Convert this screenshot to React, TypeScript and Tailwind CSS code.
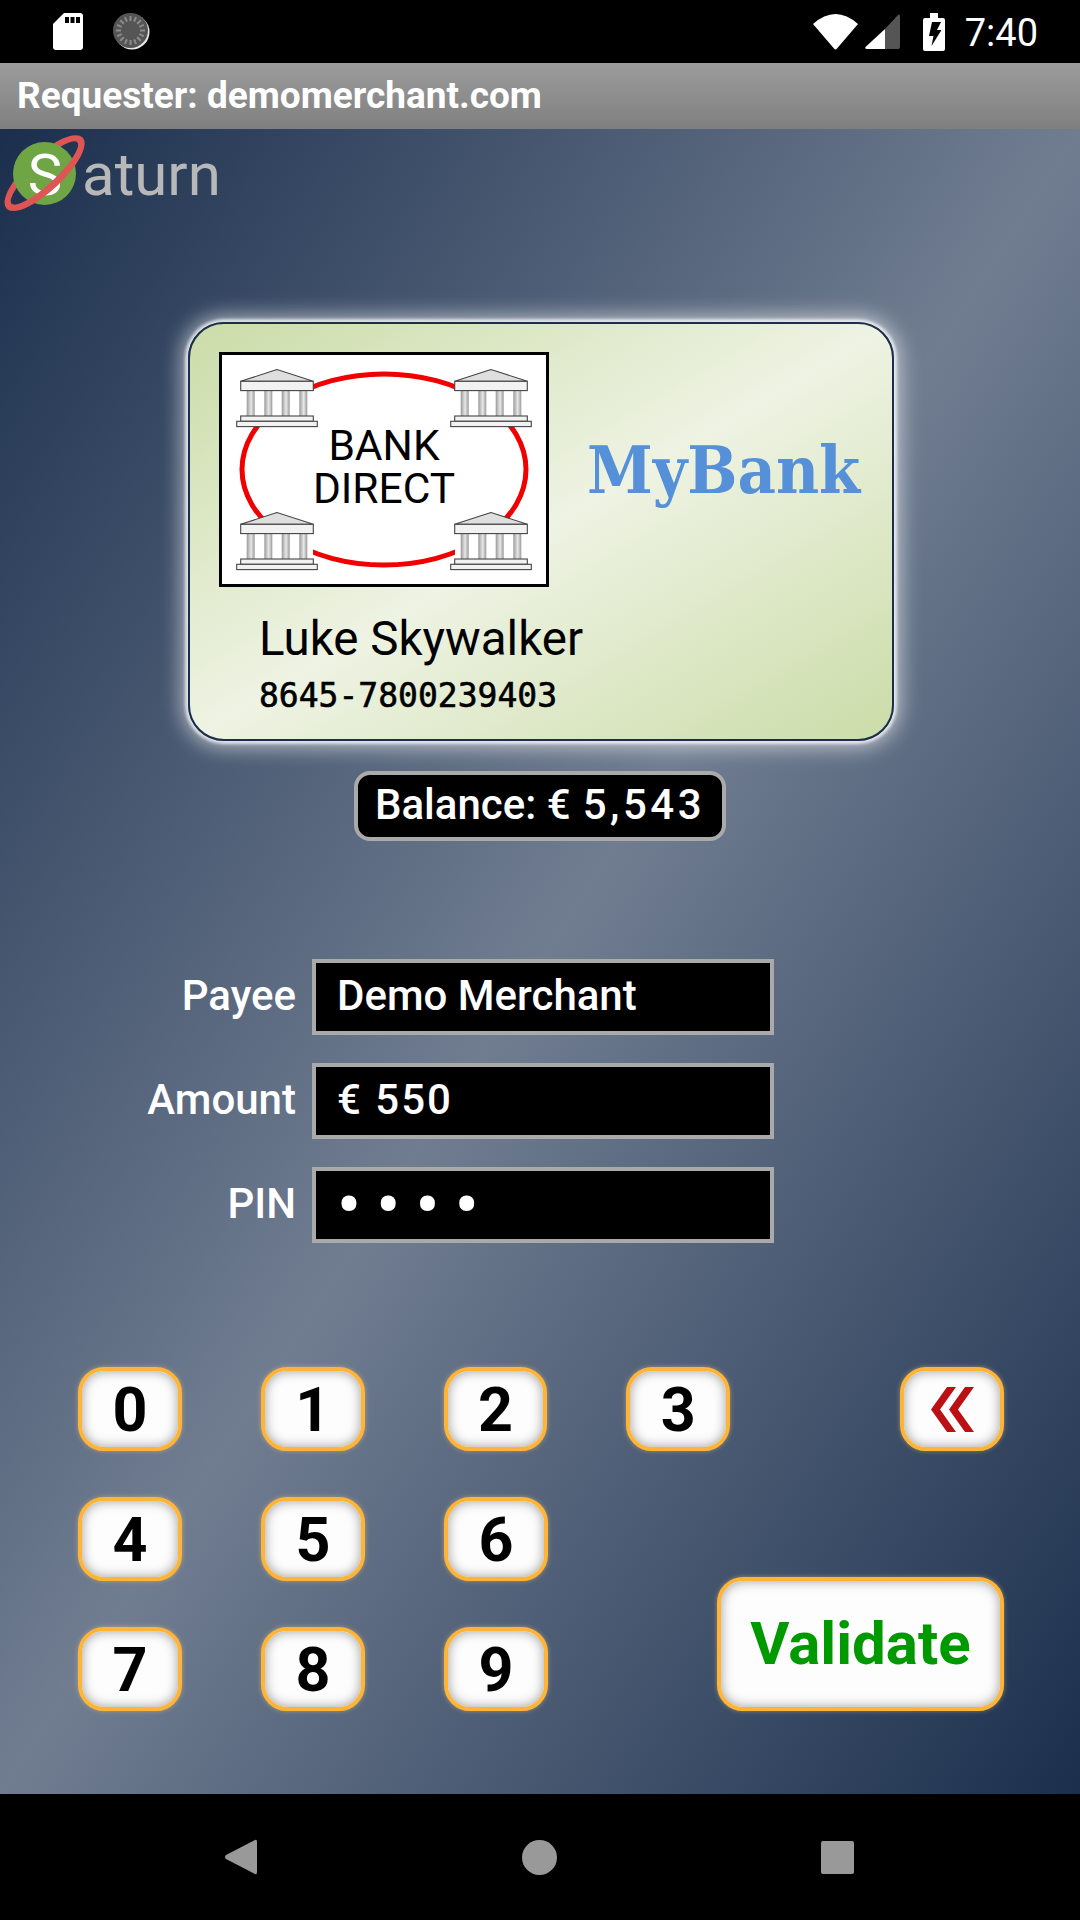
import React from "react";

const keyClass =
  "flex items-center justify-center rounded-[26px] border-4 border-[#fdb437] bg-[#fdfdfd] shadow-[inset_0_0_12px_rgba(0,0,0,0.38),0_0_5px_rgba(255,210,130,0.45)] font-bold";

function Key({ label }: { label: string }) {
  return <div className={`${keyClass} h-[84px] w-[104px] pt-[2px] text-[61px] leading-none text-black`}>{label}</div>;
}

function Building({ x, y }: { x: number; y: number }) {
  const columns = [10.7, 28.3, 45.7, 63.3];
  return (
    <g transform={`translate(${x} ${y})`} stroke="#444" strokeWidth="1.1">
      <rect x="5" y="12" width="72" height="40" fill="#fff" stroke="none" />
      {columns.map((c) => (
        <rect key={c} x={c} y="21.6" width="8" height="25.4" fill="url(#column)" stroke="none" />
      ))}
      <polygon points="41,0.5 4.7,12.3 77.3,12.3" fill="#dfdfdf" />
      <rect x="4.7" y="12.3" width="72.6" height="9.3" fill="#f2f2f2" />
      <rect x="4.7" y="47" width="72.6" height="5.3" fill="#f2f2f2" />
      <rect x="0.7" y="52.3" width="80.6" height="5.3" fill="#f2f2f2" />
    </g>
  );
}

function BankLogo() {
  return (
    <div className="h-[235px] w-[330px] shrink-0 border-[3px] border-black bg-white">
      <svg width="324" height="229" viewBox="0 0 324 229">
        <defs>
          <linearGradient id="column" x1="0" x2="1" y1="0" y2="0">
            <stop offset="0" stopColor="#999" />
            <stop offset="0.55" stopColor="#e8e8e8" />
            <stop offset="1" stopColor="#999" />
          </linearGradient>
        </defs>
        <ellipse cx="162" cy="114.5" rx="142" ry="95.5" fill="none" stroke="#f00000" strokeWidth="5" />
        <Building x={14} y={14} />
        <Building x={228} y={14} />
        <Building x={14} y={157} />
        <Building x={228} y={157} />
        <text x="162" y="105" textAnchor="middle" fontSize="42.5" fontFamily="Roboto" fill="#000">
          BANK
        </text>
        <text x="162" y="148" textAnchor="middle" fontSize="42.5" fontFamily="Roboto" fill="#000">
          DIRECT
        </text>
      </svg>
    </div>
  );
}

function Field({ label, children }: { label: string; children: React.ReactNode }) {
  return (
    <div className="flex items-center">
      <div className="w-[296px] pb-[3px] text-right text-[42px] font-medium text-white">{label}</div>
      <div className="ml-4 flex h-[76px] w-[462px] items-center border-4 border-[#aaaaaa] bg-black pb-[3px] pl-[21px] text-[42px] font-medium text-white">
        {children}
      </div>
    </div>
  );
}

function StatusBar() {
  const ticks = Array.from({ length: 16 }, (_, i) => i * 22.5);
  return (
    <div className="flex h-[63px] shrink-0 items-center bg-black pl-[53px] pr-[42px]">
      <svg width="30" height="37" viewBox="0 0 30 37">
        <path d="M11 0H27a3 3 0 0 1 3 3V34a3 3 0 0 1-3 3H3a3 3 0 0 1-3-3V11Z" fill="#fff" />
        <rect x="12" y="4" width="4" height="6" fill="#000" />
        <rect x="17.5" y="4" width="4" height="6" fill="#000" />
        <rect x="23" y="4" width="4" height="6" fill="#000" />
      </svg>
      <svg className="ml-[30px]" width="38" height="38" viewBox="0 0 38 38">
        <circle cx="19" cy="19" r="17.5" fill="#e8e8e8" />
        <circle cx="17.5" cy="17.5" r="17.5" fill="#555" />
        {ticks.map((a) => (
          <rect key={a} x="16.5" y="3" width="2" height="5" fill="#8c8c8c" transform={`rotate(${a} 17.5 17.5)`} />
        ))}
      </svg>
      <svg className="ml-auto" width="45" height="36" viewBox="0 0 45 36">
        <path d="M0 10 Q22.5 -10 45 10 L24 34.5 Q22.5 36.5 21 34.5 Z" fill="#fff" />
      </svg>
      <svg className="ml-[7px]" width="35" height="35" viewBox="0 0 35 35">
        <path d="M20 15 L0.5 33 Q-0.5 35 2 35 H20Z" fill="#fff" />
        <path d="M20 15 L33 1 Q35 -0.5 35 3 V33 Q35 35 33 35 H20Z" fill="#555" />
      </svg>
      <svg className="ml-[23px]" width="22" height="38" viewBox="0 0 22 38">
        <path
          fillRule="evenodd"
          d="M7 0h8v5h5a2 2 0 0 1 2 2v29a2 2 0 0 1-2 2H2a2 2 0 0 1-2-2V7a2 2 0 0 1 2-2h5z M9 9 L6 23 H10.5 L8.5 33 L18.5 17 H14 L18 9 Z"
          fill="#fff"
        />
      </svg>
      <div className="ml-[20px] mt-[3px] text-[38px] leading-none text-white">7:40</div>
    </div>
  );
}

function NavBar() {
  return (
    <div className="relative flex h-[126px] shrink-0 items-center bg-black pl-[225px]">
      <svg width="32" height="36" viewBox="0 0 32 36">
        <path d="M30 1 Q32 0 32 3 V33 Q32 36 30 35 L1 20 Q-1 18 1 16 Z" fill="#999" />
      </svg>
      <div className="ml-[265px] h-[35px] w-[35px] rounded-full bg-[#999]" />
      <div className="ml-[264px] h-[33px] w-[33px] rounded-[2px] bg-[#999]" />
    </div>
  );
}

function SaturnLogo() {
  return (
    <svg width="90" height="90" viewBox="0 0 90 90" className="shrink-0">
      <path
        fillRule="evenodd"
        d="M-52 0 A52 18 0 1 0 52 0 A52 18 0 1 0 -52 0 Z M-45 0 A45 11 0 1 0 45 0 A45 11 0 1 0 -45 0 Z"
        fill="#dd5555"
        transform="translate(44.5 44) rotate(-43)"
      />
      <circle cx="44.5" cy="44.5" r="31.5" fill="#6fa544" />
      <text x="45" y="66" textAnchor="middle" fontSize="58" fontFamily="Roboto" fill="#fff">
        S
      </text>
      <path
        d="M-52 0 A52 18 0 0 0 52 0 L45 0 A45 11 0 0 1 -45 0 Z"
        fill="#dd5555"
        transform="translate(44.5 44) rotate(-43)"
      />
    </svg>
  );
}

export default function App() {
  return (
    <div className="flex h-[1920px] w-[1080px] flex-col overflow-hidden bg-black font-['Roboto',sans-serif]">
      <StatusBar />

      <div className="flex h-[66px] shrink-0 items-center bg-[linear-gradient(to_bottom,#9c9c9c,#7f7f7f)] pl-[17px] text-[37px] font-bold text-white">
        Requester: demomerchant.com
      </div>

      <main className="relative flex flex-1 flex-col bg-[linear-gradient(to_bottom_right,#1b2f4d,#707d91,#1b2f4d)]">
        <div className="absolute left-0 top-0 flex items-start">
          <SaturnLogo />
          <span className="-ml-2 mt-2 text-[60px] font-normal leading-[76px] text-[#b8b8b8]">aturn</span>
        </div>

        <div className="ml-[188px] mt-[193px] h-[419px] w-[706px] rounded-[36px] border-2 border-[#1b2f4d] bg-[linear-gradient(to_bottom_right,#cbdca8,#eef3e3,#cbdca8)] pl-[29px] pt-[28px] shadow-[0_0_3px_3px_rgba(255,255,255,0.7),0_0_20px_7px_rgba(255,255,255,0.55)]">
          <div className="flex items-center">
            <BankLogo />
            <div className="ml-[38px] font-['DejaVu_Serif',serif] text-[66px] font-bold leading-none text-[#5590d8] [font-stretch:condensed]">
              MyBank
            </div>
          </div>
          <div className="ml-10 mt-6 text-[47.5px] leading-[56px] text-black">Luke Skywalker</div>
          <div className="ml-10 mt-[9px] font-['DejaVu_Sans_Mono',monospace] text-[33px] leading-10 text-black [-webkit-text-stroke:0.6px_black]">
            8645-7800239403
          </div>
        </div>

        <div className="mx-auto mt-[30px] flex h-[70px] w-[372px] items-center justify-center rounded-[16px] border-4 border-[#aaaaaa] bg-black pb-[3px] text-[42px] font-medium text-white">
          Balance: € <span className="ml-3 tracking-[3.5px]">5,543</span>
        </div>

        <div className="mt-[118px] flex flex-col gap-7">
          <Field label="Payee">Demo Merchant</Field>
          <Field label="Amount">
            <span className="tracking-[2px]">€ 550</span>
          </Field>
          <Field label="PIN">
            <span className="pt-[3px] text-[68px] leading-none tracking-[15.5px]">••••</span>
          </Field>
        </div>

        <div className="ml-[78px] mt-[124px] w-[926px]">
          <div className="flex gap-[79px]">
            <Key label="0" />
            <Key label="1" />
            <Key label="2" />
            <Key label="3" />
            <div className={`${keyClass} ml-[91px] h-[84px] w-[104px]`}>
              <svg width="43" height="45" viewBox="0 0 43 45">
                <path d="M16 0 H25 L9 22.5 L25 45 H16 L0 22.5 Z M34 0 H43 L27 22.5 L43 45 H34 L18 22.5 Z" fill="#bb1014" />
              </svg>
            </div>
          </div>
          <div className="mt-[46px] flex items-end justify-between">
            <div className="grid grid-cols-3 gap-x-[79px] gap-y-[46px]">
              {["4", "5", "6", "7", "8", "9"].map((n) => (
                <Key key={n} label={n} />
              ))}
            </div>
            <div className={`${keyClass} h-[134px] w-[287px] text-[60px] text-[#009900]`}>Validate</div>
          </div>
        </div>
      </main>

      <NavBar />
    </div>
  );
}
